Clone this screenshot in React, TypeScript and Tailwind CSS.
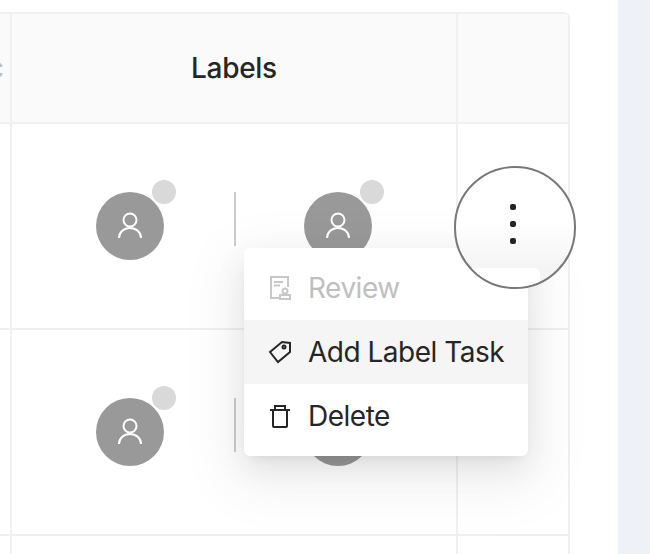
import React from "react";

const font = { fontFamily: "Inter, 'Liberation Sans', sans-serif" };

function UserIcon() {
  return (
    <svg width="28" height="28" viewBox="0 0 28 28" fill="none" stroke="#fff" strokeWidth="2">
      <circle cx="14" cy="8" r="6.500" />
      <path d="M3 26c0-6 5-10 11-10s11 4 11 10" />
    </svg>
  );
}

function Avatar() {
  return (
    <div className="relative w-[68px] h-[68px] rounded-full bg-[#999999] flex items-center justify-center">
      <UserIcon />
      <div className="absolute w-6 h-6 rounded-full bg-[#d9d9d9] left-[56px] top-[-12px]" />
    </div>
  );
}

function Row() {
  return (
    <div className="flex h-[206px] border-b-2 border-[#f0f0f0]">
      <div className="w-[10px] shrink-0" />
      <div className="w-[446px] shrink-0 border-l-2 border-[#f0f0f0] flex items-center justify-center">
        <Avatar />
        <div className="w-0.5 h-[54px] mb-[14px] bg-[#cccccc] ml-[70px] mr-[68px]" />
        <Avatar />
      </div>
      <div className="flex-1 border-l-2 border-[#f0f0f0]" />
    </div>
  );
}

function ReviewIcon() {
  return (
    <svg width="24" height="26" viewBox="0 0 24 26" fill="none" stroke="#c8c8c8" strokeWidth="2">
      <path d="M20 12V2H3v21h8" />
      <path d="M6 7h9M6 10.500h6" />
      <circle cx="17" cy="16" r="2.500" />
      <path d="M12 20h10v4H12z" />
    </svg>
  );
}

function TagIcon() {
  return (
    <svg width="24" height="24" viewBox="0 0 24 24" fill="none" stroke="#262626" strokeWidth="2">
      <path d="M2 12 14 2l8 1v9L10 22z" />
      <circle cx="16" cy="7" r="1.500" />
    </svg>
  );
}

function TrashIcon() {
  return (
    <svg width="22" height="24" viewBox="0 0 22 24" fill="none" stroke="#262626" strokeWidth="2">
      <path d="M1 6h20" />
      <path d="M6 6V2h10v4" />
      <path d="M4 6v16a1 1 0 0 0 1 1h12a1 1 0 0 0 1-1V6" />
    </svg>
  );
}

function MenuItem({ icon, label, disabled, active }: { icon: React.ReactNode; label: string; disabled?: boolean; active?: boolean }) {
  return (
    <div className={`flex items-center h-16 ${active ? "bg-[#f5f5f5]" : ""}`}>
      <div className="w-[64px] shrink-0 flex items-center justify-center pl-[8px]">{icon}</div>
      <span className={`text-[28px] leading-none tracking-[-0.5px] ${disabled ? "text-[#bfbfbf]" : "text-[#262626]"}`}>{label}</span>
    </div>
  );
}

export default function App() {
  return (
    <div className="relative w-[650px] h-[554px] bg-white overflow-hidden antialiased" style={font}>
      <div className="flex h-full">
        <div className="w-[570px] shrink-0 pt-3 h-full">
          <div className="h-full border-t-2 border-r-2 border-[#f0f0f0] rounded-tr-md overflow-hidden">
            <div className="flex h-[110px] bg-[#fafafa] border-b-2 border-[#f0f0f0]">
              <div className="w-[10px] shrink-0 overflow-hidden text-[28px] font-medium text-[#bfbfbf] flex items-center justify-end">
                <span className="pr-[6px]">c</span>
              </div>
              <div className="w-[446px] shrink-0 border-l-2 border-[#f0f0f0] flex items-center justify-center text-[28px] font-medium tracking-[-0.3px] text-[#262626]">
                Labels
              </div>
              <div className="flex-1 border-l-2 border-[#f0f0f0]" />
            </div>
            <Row />
            <Row />
            <div className="flex h-full">
              <div className="w-[10px] shrink-0" />
              <div className="w-[446px] shrink-0 border-l-2 border-[#f0f0f0]" />
              <div className="flex-1 border-l-2 border-[#f0f0f0]" />
            </div>
          </div>
        </div>
        <div className="w-[48px] shrink-0" />
        <div className="flex-1 bg-[#eef2f6]" />
      </div>

      <div className="absolute left-[244px] top-[248px] w-[284px] h-[208px] py-2 bg-white rounded-md shadow-[0_6px_12px_-8px_rgba(0,0,0,0.12),0_12px_32px_0_rgba(0,0,0,0.08),0_18px_56px_16px_rgba(0,0,0,0.05)]">
        <MenuItem icon={<ReviewIcon />} label="Review" disabled />
        <MenuItem icon={<TagIcon />} label="Add Label Task" active />
        <MenuItem icon={<TrashIcon />} label="Delete" />
      </div>

      <div className="absolute left-[454px] top-[166px] w-[122px] h-[123px] rounded-full border-2 border-[#787878] overflow-hidden bg-linear-to-b from-white from-45% to-[#f4f4f4] to-85% flex flex-col items-center pt-[36px] gap-[11px] pr-[4px]">
        <div className="absolute left-[-10px] top-[100px] w-[94px] h-[30px] bg-white rounded-md" />
        <div className="w-[6px] h-[6px] rounded-[2px] bg-[#262626]" />
        <div className="w-[6px] h-[6px] rounded-[2px] bg-[#262626]" />
        <div className="w-[6px] h-[6px] rounded-[2px] bg-[#262626]" />
      </div>
    </div>
  );
}
